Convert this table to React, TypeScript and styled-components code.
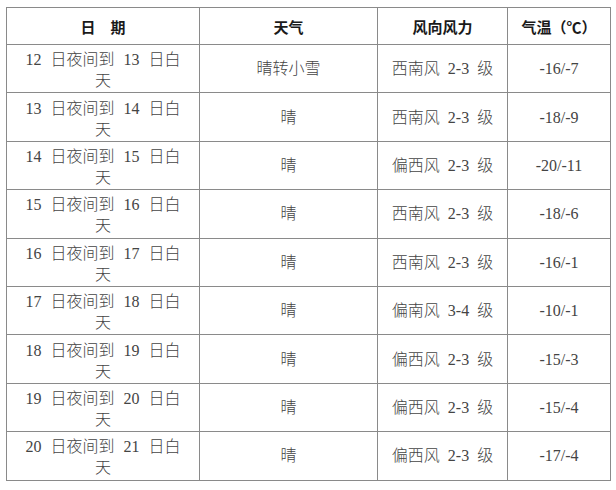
import React from "react";
import styled, { createGlobalStyle } from "styled-components";

const rows = [
  { date: "12 日夜间到 13 日白天", weather: "晴转小雪", wind: "西南风 2-3 级", temp: "-16/-7" },
  { date: "13 日夜间到 14 日白天", weather: "晴", wind: "西南风 2-3 级", temp: "-18/-9" },
  { date: "14 日夜间到 15 日白天", weather: "晴", wind: "偏西风 2-3 级", temp: "-20/-11" },
  { date: "15 日夜间到 16 日白天", weather: "晴", wind: "西南风 2-3 级", temp: "-18/-6" },
  { date: "16 日夜间到 17 日白天", weather: "晴", wind: "西南风 2-3 级", temp: "-16/-1" },
  { date: "17 日夜间到 18 日白天", weather: "晴", wind: "偏南风 3-4 级", temp: "-10/-1" },
  { date: "18 日夜间到 19 日白天", weather: "晴", wind: "偏西风 2-3 级", temp: "-15/-3" },
  { date: "19 日夜间到 20 日白天", weather: "晴", wind: "偏西风 2-3 级", temp: "-15/-4" },
  { date: "20 日夜间到 21 日白天", weather: "晴", wind: "偏西风 2-3 级", temp: "-17/-4" },
];

const columns = [193, 178, 130, 103];

const App = () => {
  return (
    <>
      <GlobalStyle />
      <StylePage>
        <StyleTable>
          <colgroup>
            {columns.map((w, i) => (
              <StyleCol key={i} $width={w} />
            ))}
          </colgroup>
          <thead>
            <StyleHeadRow>
              <StyleHeadCell>日　期</StyleHeadCell>
              <StyleHeadCell>天气</StyleHeadCell>
              <StyleHeadCell>风向风力</StyleHeadCell>
              <StyleHeadCell>气温（℃）</StyleHeadCell>
            </StyleHeadRow>
          </thead>
          <tbody>
            {rows.map((r) => (
              <StyleRow key={r.date}>
                <StyleDateCell>{r.date}</StyleDateCell>
                <StyleCell>{r.weather}</StyleCell>
                <StyleCell>{r.wind}</StyleCell>
                <StyleCell>{r.temp}</StyleCell>
              </StyleRow>
            ))}
          </tbody>
        </StyleTable>
      </StylePage>
    </>
  );
};

const GlobalStyle = createGlobalStyle`
  body {
    margin: 0;
    background: #fff;
  }
`;

const StylePage = styled.div`
  padding: 7px 6px 0 6px;
  font-family: "Liberation Serif", "Noto Sans CJK SC", serif;
  color: #444;
`;

const StyleTable = styled.table`
  border-collapse: collapse;
  table-layout: fixed;
  width: 604px;
`;

const StyleCol = styled.col<{ $width: number }>`
  width: ${(p) => p.$width}px;
`;

const StyleHeadRow = styled.tr`
  height: 37px;
`;

const StyleRow = styled.tr`
  height: 48.4px;
`;

const StyleHeadCell = styled.th`
  border: 1px solid #8a8a8a;
  font-size: 15px;
  font-weight: bold;
  color: #1a1a1a;
  text-align: center;
  vertical-align: middle;
  padding: 0;
`;

const StyleCell = styled.td`
  border: 1px solid #8a8a8a;
  font-size: 16px;
  font-weight: 300;
  line-height: 21px;
  word-spacing: 4px;
  text-align: center;
  vertical-align: middle;
  padding: 0 4px;
`;

const StyleDateCell = styled(StyleCell)`
  word-spacing: 5px;
  padding: 3px 14px 0;
`;

export default App;
